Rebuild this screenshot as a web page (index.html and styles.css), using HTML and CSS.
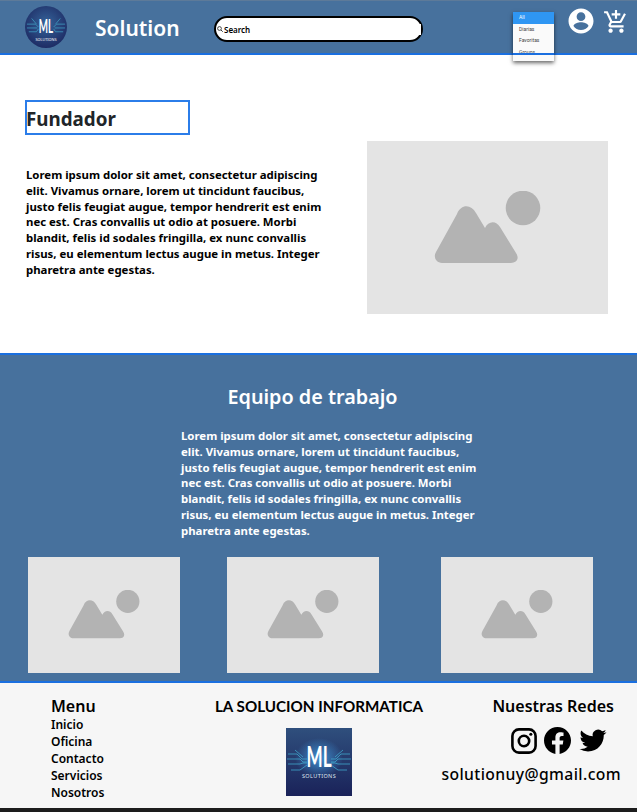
FILE: index.html
```html
<!DOCTYPE html>
<html>
  <head>
    <meta charset="UTF-8" />
    <title>ML Solution</title>
    <link rel="stylesheet" href="styles.css">
  </head>
  <body>
    <header class="topbar">
      <div class="logo-round">
        <svg viewBox="0 0 44 44" width="42" height="42">
          <defs>
            <radialGradient id="glow" cx="50%" cy="42%" r="60%">
              <stop offset="0" stop-color="#35649a" />
              <stop offset="1" stop-color="#1d2a63" />
            </radialGradient>
          </defs>
          <circle cx="22" cy="22" r="22" fill="url(#glow)" />
          <path d="M2 19h9l3 3M2 23h11M4 27h8l2-3M42 19h-9l-3 3M42 23H31M40 27h-8l-2-3M7 13l5 6M37 13l-5 6" stroke="#3f9fc4" stroke-width=".8" fill="none" />
          <text x="22" y="28" class="logo-ml-small" text-anchor="middle" textLength="15" lengthAdjust="spacingAndGlyphs">ML</text>
          <text x="22" y="37" class="logo-sub" text-anchor="middle">SOLUTIONS</text>
        </svg>
      </div>
      <div class="brand">Solution</div>
      <form class="search" onsubmit="return false;">
        <svg viewBox="0 0 12 12" width="6" height="6"><circle cx="5" cy="5" r="3.8" fill="none" stroke="#222" stroke-width="1.6" /><path d="M8 8l3.5 3.5" stroke="#222" stroke-width="1.8" /></svg>
        <input type="text" placeholder="Search" />
      </form>
      <div class="dropdown">
        <div class="dropdown-item active">All</div>
        <div class="dropdown-item">Diarias</div>
        <div class="dropdown-item">Favoritas</div>
        <div class="dropdown-item">Groups</div>
      </div>
      <svg class="icon-user" viewBox="0 0 24 24" width="30" height="30"><path fill="#fff" d="M12 2C6.48 2 2 6.48 2 12s4.48 10 10 10 10-4.480 10-10S17.520 2 12 2zm0 3c1.930 0 3.500 1.570 3.500 3.500S13.930 12 12 12s-3.500-1.570-3.500-3.500S10.070 5 12 5zm0 14.200c-2.500 0-4.710-1.280-6-3.220.03-1.990 4-3.080 6-3.080s5.970 1.090 6 3.080c-1.290 1.940-3.500 3.220-6 3.220z"/></svg>
      <svg class="icon-cart" viewBox="0 0 24 24" width="26" height="26"><path fill="#fff" d="M11 9h2V6h3V4h-3V1h-2v3H8v2h3v3zm-4 9c-1.100 0-1.990.9-1.990 2S5.900 22 7 22s2-.9 2-2-.9-2-2-2zm10 0c-1.100 0-1.990.9-1.990 2s.89 2 1.990 2 2-.9 2-2-.9-2-2-2zm-9.830-3.250l.03-.12.9-1.630h7.450c.75 0 1.410-.41 1.750-1.030l3.860-7.010L19.420 4h-.01l-1.100 2-2.760 5H8.530l-.13-.27L6.160 6l-.95-2-.94-2H1v2h2l3.600 7.590-1.350 2.450c-.16.28-.25.61-.25.960 0 1.100.9 2 2 2h12v-2H7.420c-.13 0-.25-.11-.25-.25z"/></svg>
    </header>

    <section class="founder">
      <div class="founder-text">
        <h1 class="founder-title">Fundador</h1>
        <p class="lorem">Lorem ipsum dolor sit amet, consectetur adipiscing elit. Vivamus ornare, lorem ut tincidunt faucibus, justo felis feugiat augue, tempor hendrerit est enim nec est. Cras convallis ut odio at posuere. Morbi blandit, felis id sodales fringilla, ex nunc convallis risus, eu elementum lectus augue in metus. Integer pharetra ante egestas.</p>
      </div>
      <div class="placeholder big">
        <svg viewBox="0 0 107 73" width="107" height="73"><path fill="#b3b3b3" d="M8 72C2 72-1 66 2 61L23 23C27 13 37 13 42 22L51 37C54 30 62 29 66 36L82 62C86 68 82 72 77 72Z"/><circle cx="89" cy="17" r="17.300" fill="#b3b3b3"/></svg>
      </div>
    </section>

    <section class="team">
      <h2 class="team-title">Equipo de trabajo</h2>
      <p class="lorem team-text">Lorem ipsum dolor sit amet, consectetur adipiscing elit. Vivamus ornare, lorem ut tincidunt faucibus, justo felis feugiat augue, tempor hendrerit est enim nec est. Cras convallis ut odio at posuere. Morbi blandit, felis id sodales fringilla, ex nunc convallis risus, eu elementum lectus augue in metus. Integer pharetra ante egestas.</p>
      <div class="team-photos">
        <div class="placeholder small"><svg viewBox="0 0 107 73" width="72" height="49"><path fill="#b3b3b3" d="M8 72C2 72-1 66 2 61L23 23C27 13 37 13 42 22L51 37C54 30 62 29 66 36L82 62C86 68 82 72 77 72Z"/><circle cx="89" cy="17" r="17.300" fill="#b3b3b3"/></svg></div>
        <div class="placeholder small"><svg viewBox="0 0 107 73" width="72" height="49"><path fill="#b3b3b3" d="M8 72C2 72-1 66 2 61L23 23C27 13 37 13 42 22L51 37C54 30 62 29 66 36L82 62C86 68 82 72 77 72Z"/><circle cx="89" cy="17" r="17.300" fill="#b3b3b3"/></svg></div>
        <div class="placeholder small"><svg viewBox="0 0 107 73" width="72" height="49"><path fill="#b3b3b3" d="M8 72C2 72-1 66 2 61L23 23C27 13 37 13 42 22L51 37C54 30 62 29 66 36L82 62C86 68 82 72 77 72Z"/><circle cx="89" cy="17" r="17.300" fill="#b3b3b3"/></svg></div>
      </div>
    </section>

    <footer class="footer">
      <div class="footer-menu">
        <h3 class="footer-heading">Menu</h3>
        <a class="footer-link">Inicio</a>
        <a class="footer-link">Oficina</a>
        <a class="footer-link">Contacto</a>
        <a class="footer-link">Servicios</a>
        <a class="footer-link">Nosotros</a>
      </div>
      <div class="footer-center">
        <h3 class="footer-company">LA SOLUCION INFORMATICA</h3>
        <svg class="footer-logo" viewBox="0 0 66 68" width="66" height="68">
          <defs>
            <linearGradient id="square" x1="0" y1="0" x2="0" y2="1">
              <stop offset="0" stop-color="#2f4f7d" />
              <stop offset="1" stop-color="#1a2259" />
            </linearGradient>
            <radialGradient id="halo">
              <stop offset="0" stop-color="#3f8fd0" />
              <stop offset="1" stop-color="#3f8fd0" stop-opacity="0" />
            </radialGradient>
          </defs>
          <rect width="66" height="68" fill="url(#square)" />
          <ellipse cx="33" cy="30" rx="24" ry="20" fill="url(#halo)" />
          <path d="M2 26h9l5 5h5M1 31h13l3 3h4M2 36h12l3-1h4M5 42h9l7-5M64 26h-9l-5 5h-5M65 31H52l-3 3h-4M64 36H52l-3-1h-4M61 42h-9l-7-5M9 22l8 7M57 22l-8 7" stroke="#3fa6cc" stroke-width=".8" fill="none" />
          <text x="33" y="39" class="logo-ml" text-anchor="middle" textLength="25" lengthAdjust="spacingAndGlyphs">ML</text>
          <text x="33" y="50" class="logo-sub-big" text-anchor="middle">SOLUTIONS</text>
        </svg>
      </div>
      <div class="footer-social">
        <h3 class="footer-heading">Nuestras Redes</h3>
        <div class="social-icons">
          <svg viewBox="0 0 24 24" width="26" height="26"><rect x="1.300" y="1.300" width="21.400" height="21.400" rx="6" fill="none" stroke="#000" stroke-width="2.400"/><circle cx="12" cy="12" r="4.800" fill="none" stroke="#000" stroke-width="2.400"/><circle cx="18.300" cy="5.700" r="1.400"/></svg>
          <svg viewBox="0 0 24 24" width="27" height="27"><path d="M24 12.070C24 5.400 18.630 0 12 0S0 5.400 0 12.070c0 6.030 4.390 11.020 10.130 11.930v-8.440H7.080v-3.490h3.050V9.410c0-3.020 1.790-4.690 4.530-4.690 1.310 0 2.690.24 2.690.24v2.970h-1.510c-1.490 0-1.960.93-1.960 1.880v2.260h3.330l-.53 3.490h-2.800V24C19.610 23.090 24 18.100 24 12.070z"/></svg>
          <svg viewBox="0 0 24 24" width="30" height="27"><path d="M23.950 4.570a10 10 0 0 1-2.820.77 4.960 4.960 0 0 0 2.160-2.720c-.95.550-2 .96-3.130 1.190a4.920 4.920 0 0 0-8.380 4.480C7.690 8.100 4.070 6.130 1.640 3.160a4.820 4.820 0 0 0-.67 2.480c0 1.710.87 3.210 2.190 4.100a4.900 4.900 0 0 1-2.230-.62v.06a4.920 4.920 0 0 0 3.950 4.830 5 5 0 0 1-2.210.08 4.940 4.940 0 0 0 4.600 3.420A9.870 9.870 0 0 1 0 19.540a14 14 0 0 0 7.560 2.210c9.050 0 14-7.500 14-13.980 0-.21 0-.42-.02-.63a9.940 9.940 0 0 0 2.460-2.550z"/></svg>
        </div>
        <div class="footer-mail">solutionuy@gmail.com</div>
      </div>
    </footer>
    <div class="page-end"></div>
  </body>
</html>
```

FILE: styles.css
```css
* {
  box-sizing: border-box;
}

body {
  margin: 0;
  font-family: "Noto Sans", Arial, sans-serif;
  background-color: #fff;
  color: #000;
}

.topbar {
  position: relative;
  display: flex;
  align-items: center;
  height: 55px;
  padding: 0 0 0 25px;
  background-color: #47719d;
  border-top: 1px solid #5d7a99;
  border-bottom: 2px solid #1a6fe0;
}

.logo-round {
  display: flex;
  width: 44px;
  height: 42px;
}

.logo-ml {
  font-family: Lato, sans-serif;
  font-weight: 700;
  font-size: 28px;
  fill: #fff;
}

.logo-ml-small {
  font-family: Lato, sans-serif;
  font-weight: 700;
  font-size: 19px;
  fill: #fff;
}

.logo-sub {
  font-family: "Noto Sans", sans-serif;
  font-size: 4px;
  fill: #fff;
}

.logo-sub-big {
  font-family: "Noto Sans", sans-serif;
  font-size: 5.500px;
  letter-spacing: 0.400px;
  fill: #dfe6f2;
}

.brand {
  margin-left: 26px;
  margin-top: 2px;
  width: 120px;
  color: #fff;
  font-size: 21px;
  font-weight: 600;
}

.search {
  display: flex;
  align-items: center;
  width: 209px;
  height: 26px;
  margin-top: 4px;
  margin-left: -1px;
  padding-left: 1px;
  background-color: #fff;
  border: 2px solid #000;
  border-radius: 13px;
}

.search input {
  flex: 1;
  min-width: 0;
  padding: 0 0 0 1px;
  border: none;
  outline: none;
  font-family: "Noto Sans", sans-serif;
  font-size: 8px;
  font-weight: 600;
}

.search input::placeholder {
  color: #000;
  opacity: 1;
}

.dropdown {
  position: absolute;
  top: 11px;
  left: 513px;
  width: 41px;
  height: 49px;
  overflow: hidden;
  background-color: #fafafa;
  box-shadow: 0 2px 4px rgba(0, 0, 0, 0.6);
}

.dropdown::after {
  content: "";
  position: absolute;
  top: 41px;
  left: 0;
  width: 100%;
  height: 2px;
  background-color: #1a6fe0;
}

.dropdown-item {
  height: 11.500px;
  padding-left: 6px;
  font-family: Roboto, sans-serif;
  font-size: 5px;
  line-height: 11.500px;
  color: #444;
}

.dropdown-item.active {
  background-color: #2f96f3;
  color: #fff;
}

.icon-user {
  position: absolute;
  top: 5px;
  left: 566px;
}

.icon-cart {
  position: absolute;
  top: 8px;
  left: 603px;
}

.founder {
  display: flex;
  justify-content: space-between;
  height: 298px;
  padding: 45px 29px 0 25px;
}

.founder-text {
  width: 300px;
}

.founder-title {
  width: 165px;
  height: 35px;
  margin: 0 0 32px;
  border: 2px solid #2b7de9;
  color: #212529;
  font-size: 18.800px;
  font-weight: 700;
  line-height: 34px;
  text-indent: -1px;
}

.lorem {
  margin: 0;
  padding-left: 1px;
  font-size: 11.400px;
  font-weight: 700;
  line-height: 15.800px;
}

.placeholder {
  display: flex;
  align-items: center;
  justify-content: center;
  background-color: #e4e4e4;
}

.placeholder.big {
  width: 241px;
  height: 173px;
  margin-top: 41px;
}

.team {
  height: 328px;
  padding-top: 28px;
  background-color: #47719d;
  border-top: 2px solid #1a6fe0;
  color: #fff;
}

.team-title {
  margin: 0 0 17px;
  padding-right: 12px;
  font-size: 19.800px;
  font-weight: 600;
  line-height: 28px;
  text-align: center;
}

.team-text {
  width: 300px;
  margin-left: 180px;
}

.team-photos {
  display: flex;
  margin-top: 18px;
  padding-left: 28px;
  gap: 47px;
}

.placeholder.small {
  width: 152px;
  height: 116px;
}

.placeholder.small + .placeholder.small + .placeholder.small {
  margin-left: 15px;
}

.footer {
  display: flex;
  height: 127px;
  background-color: #f6f6f6;
  border-top: 2px solid #1a6fe0;
}

.footer-menu {
  display: flex;
  flex-direction: column;
  width: 215px;
  padding: 13px 0 0 51px;
}

.footer-heading {
  margin: 0;
  font-size: 16px;
  font-weight: 600;
  line-height: 20px;
}

.footer-link {
  font-size: 12px;
  font-weight: 600;
  line-height: 17px;
}

.footer-center {
  display: flex;
  flex-direction: column;
  align-items: center;
  width: 208px;
  padding-top: 13px;
}

.footer-company {
  margin: 0 0 12px;
  font-family: Lato, sans-serif;
  font-size: 15.200px;
  font-weight: 700;
  line-height: 20px;
  white-space: nowrap;
}

.footer-social {
  display: flex;
  flex-direction: column;
  align-items: flex-end;
  flex: 1;
  padding: 13px 16px 0 0;
}

.footer-social .footer-heading {
  margin-right: 7px;
  font-size: 16px;
}

.social-icons {
  display: flex;
  align-items: center;
  gap: 7px;
  margin: 11px 13px 0 0;
}

.footer-mail {
  margin-top: 10px;
  font-size: 15.700px;
  font-weight: 500;
  line-height: 20px;
  letter-spacing: 0.400px;
}

.page-end {
  height: 4px;
  background-color: #1d1d1d;
}
```
